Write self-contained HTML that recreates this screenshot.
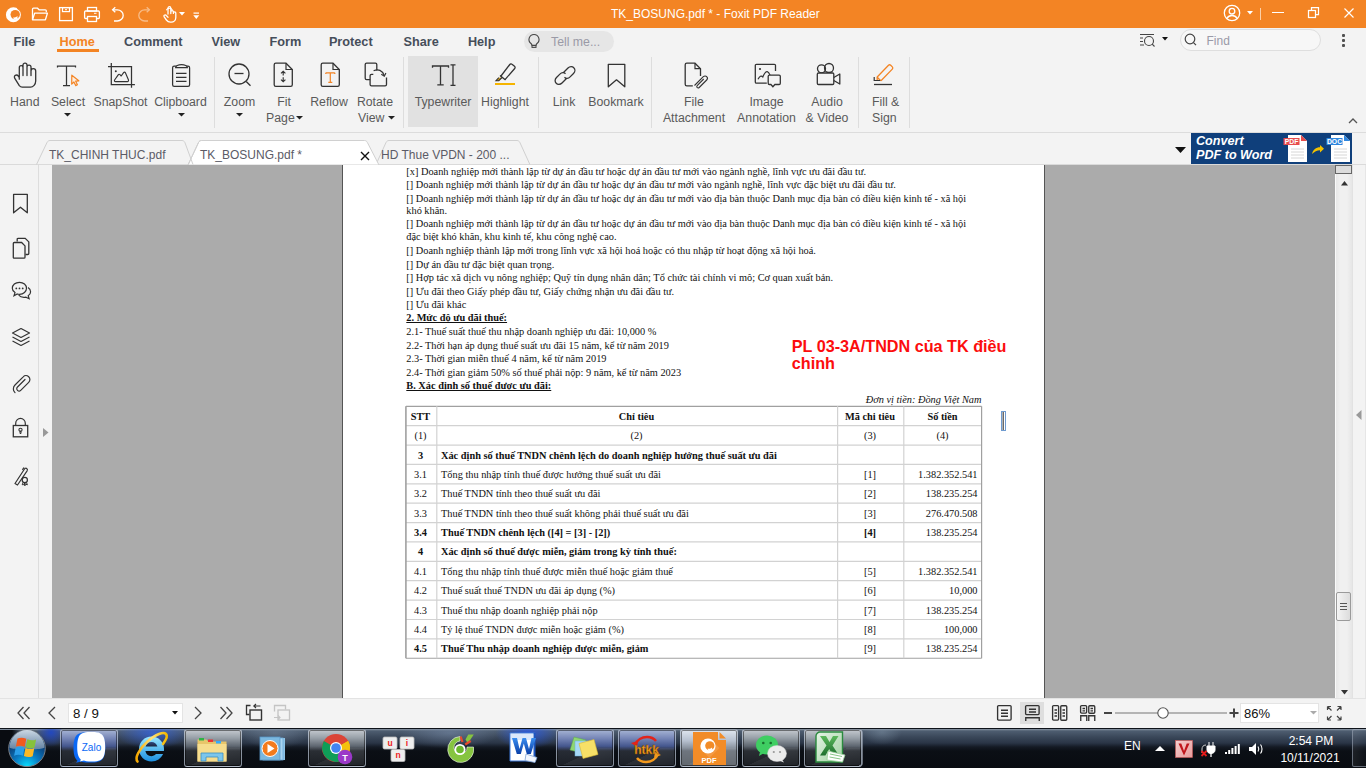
<!DOCTYPE html>
<html><head><meta charset="utf-8">
<style>
*{margin:0;padding:0;box-sizing:border-box}
html,body{width:1366px;height:768px;overflow:hidden;background:#f3f3f3;font-family:"Liberation Sans",sans-serif;position:relative}
.a{position:absolute}
svg.a{overflow:visible}
</style></head><body>
<div class="a" style="left:0px;top:0px;width:1366px;height:28px;background:#f38424"></div>
<svg class="a" style="left:5px;top:5px;" width="18" height="18" viewBox="0 0 18 18"><circle cx="8.4" cy="9.7" r="7.5" fill="#fff"/><circle cx="10.2" cy="9.6" r="4.7" fill="#f38424"/><path d="M8.2 12.2c1.6.5 3.2 0 4.3-1.2.2.7 0 1.4-.4 2 .9-.3 1.5-.9 1.9-1.6-.4 2-2.3 3.3-4.3 3.1-.8-.1-1.3-.9-1.5-2.3z" fill="#fff"/><path d="M12 3.2l2.6 2.4M14.2 2.8l1.8 2.2" stroke="#f38424" stroke-width="0.9"/></svg>
<svg class="a" style="left:31px;top:6px;" width="18" height="16" viewBox="0 0 18 16"><path d="M1.5 13.5V3.2c0-.6.4-1 1-1h4l1.6 1.6h6.2c.6 0 1 .4 1 1v1.4" stroke="#fff" stroke-width="1.3" fill="none"/><path d="M1.5 13.8L3.6 7.2h12.8l-2 6.6z" stroke="#fff" stroke-width="1.3" fill="none" stroke-linejoin="round"/></svg>
<svg class="a" style="left:58px;top:6px;" width="16" height="16" viewBox="0 0 16 16"><rect x="1.6" y="1.6" width="12.8" height="13" fill="none" stroke="#fff" stroke-width="1.3"/><rect x="4.5" y="1.6" width="7" height="4" fill="none" stroke="#fff" stroke-width="1.2"/><rect x="7" y="3.2" width="2" height="1" fill="#fff"/></svg>
<svg class="a" style="left:83px;top:6px;" width="18" height="17" viewBox="0 0 18 17"><rect x="4.5" y="1.5" width="9" height="3.6" fill="none" stroke="#fff" stroke-width="1.3"/><rect x="1.6" y="5" width="14.8" height="7.5" rx="1" fill="none" stroke="#fff" stroke-width="1.3"/><rect x="4.5" y="10.5" width="9" height="5" fill="#f38424" stroke="#fff" stroke-width="1.3"/><rect x="11" y="6.8" width="2.5" height="1" fill="#fff"/></svg>
<svg class="a" style="left:111px;top:6px;" width="14" height="16" viewBox="0 0 14 16"><path d="M1.8 3.8h4.5c3.3 0 5.9 2.6 5.9 5.6s-2.6 5.6-5.9 5.6H3" stroke="#fff" stroke-width="1.3" fill="none"/><path d="M4.3 1.3L1.6 3.8l2.7 2.5" stroke="#fff" stroke-width="1.3" fill="none"/></svg>
<svg class="a" style="left:137px;top:6px;" width="14" height="16" viewBox="0 0 14 16"><g opacity="0.45"><path d="M12.2 3.8H7.7C4.4 3.8 1.8 6.4 1.8 9.4s2.6 5.6 5.9 5.6H11" stroke="#fff" stroke-width="1.3" fill="none"/><path d="M9.7 1.3l2.7 2.5-2.7 2.5" stroke="#fff" stroke-width="1.3" fill="none"/></g></svg>
<svg class="a" style="left:162px;top:5px;" width="17" height="18" viewBox="0 0 17 18"><path d="M6 9V3.2c0-.9.6-1.5 1.4-1.5s1.4.6 1.4 1.5V8.5M8.8 8V7c0-.8.6-1.3 1.3-1.3s1.3.5 1.3 1.3v1.4M11.4 8c0-.7.5-1.2 1.2-1.2s1.2.5 1.2 1.2v4.5c0 2.7-2 4.7-4.6 4.7H8.4C6.6 17.2 5.4 16.4 4.4 15L2.2 11.8c-.5-.7-.3-1.5.4-1.8.6-.3 1.3 0 1.7.5L6 12.2" stroke="#fff" stroke-width="1.3" fill="none" stroke-linecap="round"/><path d="M4.3 5.2a3.4 3.4 0 0 1 6.2 0" stroke="#fff" stroke-width="1.1" fill="none"/></svg>
<svg class="a" style="left:179px;top:12px;" width="7" height="4" viewBox="0 0 7 4"><path d="M0 0h6L3 3.5z" fill="#fff"/></svg>
<svg class="a" style="left:193px;top:12px;" width="7" height="8" viewBox="0 0 7 8"><rect x="0.5" y="0.5" width="5.5" height="1.2" fill="#fff"/><path d="M0.3 3.2h6L3.3 7z" fill="#fff"/></svg>
<div class="a" style="left:611px;top:8.34px;font-size:12px;line-height:12px;font-family:'Liberation Sans',sans-serif;font-weight:normal;font-style:normal;color:#fff;white-space:nowrap;">TK_BOSUNG.pdf * - Foxit PDF Reader</div>
<svg class="a" style="left:1223px;top:4px;" width="18" height="18" viewBox="0 0 18 18"><circle cx="9" cy="9" r="7.7" stroke="#fff" stroke-width="1.3" fill="none"/><circle cx="9" cy="7.2" r="2.8" stroke="#fff" stroke-width="1.3" fill="none"/><path d="M3.8 14.5c1.2-2 3-3 5.2-3s4 1 5.2 3" stroke="#fff" stroke-width="1.3" fill="none"/></svg>
<svg class="a" style="left:1247px;top:11px;" width="6" height="4" viewBox="0 0 6 4"><path d="M0 0h6L3 3.5z" fill="#fff"/></svg>
<div class="a" style="left:1260px;top:8px;width:1px;height:12px;background:#fbd0a8"></div>
<div class="a" style="left:1272px;top:12px;width:12px;height:1.3px;background:#fff"></div>
<svg class="a" style="left:1307px;top:6px;" width="13" height="13" viewBox="0 0 13 13"><rect x="1.5" y="4.5" width="7" height="7" fill="none" stroke="#fff" stroke-width="1.25"/><path d="M4.5 4.5v-3h7v7h-3" fill="none" stroke="#fff" stroke-width="1.25"/></svg>
<svg class="a" style="left:1343px;top:7px;" width="12" height="12" viewBox="0 0 12 12"><path d="M1.5 1.5l9 9M10.5 1.5l-9 9" stroke="#fff" stroke-width="1.15"/></svg>
<div class="a" style="left:13.5px;top:35.55px;font-size:12.7px;line-height:12.7px;font-family:'Liberation Sans',sans-serif;font-weight:bold;font-style:normal;color:#464e5a;white-space:nowrap;">File</div>
<div class="a" style="left:124.0px;top:35.55px;font-size:12.7px;line-height:12.7px;font-family:'Liberation Sans',sans-serif;font-weight:bold;font-style:normal;color:#464e5a;white-space:nowrap;">Comment</div>
<div class="a" style="left:211.5px;top:35.55px;font-size:12.7px;line-height:12.7px;font-family:'Liberation Sans',sans-serif;font-weight:bold;font-style:normal;color:#464e5a;white-space:nowrap;">View</div>
<div class="a" style="left:269.5px;top:35.55px;font-size:12.7px;line-height:12.7px;font-family:'Liberation Sans',sans-serif;font-weight:bold;font-style:normal;color:#464e5a;white-space:nowrap;">Form</div>
<div class="a" style="left:328.9px;top:35.55px;font-size:12.7px;line-height:12.7px;font-family:'Liberation Sans',sans-serif;font-weight:bold;font-style:normal;color:#464e5a;white-space:nowrap;">Protect</div>
<div class="a" style="left:403.5px;top:35.55px;font-size:12.7px;line-height:12.7px;font-family:'Liberation Sans',sans-serif;font-weight:bold;font-style:normal;color:#464e5a;white-space:nowrap;">Share</div>
<div class="a" style="left:467.9px;top:35.55px;font-size:12.7px;line-height:12.7px;font-family:'Liberation Sans',sans-serif;font-weight:bold;font-style:normal;color:#464e5a;white-space:nowrap;">Help</div>
<div class="a" style="left:59.5px;top:35.55px;font-size:12.7px;line-height:12.7px;font-family:'Liberation Sans',sans-serif;font-weight:bold;font-style:normal;color:#f38424;white-space:nowrap;">Home</div>
<div class="a" style="left:57px;top:49px;width:42px;height:3px;background:#f38424"></div>
<div class="a" style="left:524px;top:31px;width:90px;height:21px;background:#e6e6e6;border-radius:11px"></div>
<svg class="a" style="left:527px;top:33px;" width="14" height="16" viewBox="0 0 14 16"><path d="M7 1.5a5 5 0 0 0-3 9c.6.5.9 1.1.9 1.8h4.2c0-.7.3-1.3.9-1.8a5 5 0 0 0-3-9z" fill="none" stroke="#444" stroke-width="1.1"/><rect x="5" y="12.6" width="4" height="1.8" fill="none" stroke="#444" stroke-width="1"/></svg>
<div class="a" style="left:551px;top:35.59px;font-size:12.3px;line-height:12.3px;font-family:'Liberation Sans',sans-serif;font-weight:normal;font-style:normal;color:#9a9aa6;white-space:nowrap;">Tell me...</div>
<svg class="a" style="left:1139px;top:33px;" width="18" height="14" viewBox="0 0 18 14"><path d="M1 1.5h14M1 5h3M1 8.5h3M1 12h4" stroke="#444" stroke-width="1.1"/><circle cx="10" cy="8" r="4.5" fill="none" stroke="#444" stroke-width="1.1"/><path d="M13.2 11.2l2.3 2.3" stroke="#444" stroke-width="1.1"/></svg>
<svg class="a" style="left:1162px;top:37px;" width="6" height="4" viewBox="0 0 6 4"><path d="M0 0h6L3 3.5z" fill="#111"/></svg>
<div class="a" style="left:1180px;top:29px;width:141px;height:22px;background:#f7f7f7;border:1px solid #dedede;border-radius:11px"></div>
<svg class="a" style="left:1184px;top:33px;" width="14" height="14" viewBox="0 0 14 14"><circle cx="6" cy="6" r="4.8" fill="none" stroke="#444" stroke-width="1.2"/><path d="M9.5 9.6l2.5 2.5" stroke="#444" stroke-width="1.2"/></svg>
<div class="a" style="left:1206.5px;top:35.14px;font-size:12px;line-height:12px;font-family:'Liberation Sans',sans-serif;font-weight:normal;font-style:normal;color:#9a9aa8;white-space:nowrap;">Find</div>
<div class="a" style="left:1342px;top:34px;width:3px;height:3px;background:#505050;border-radius:1px"></div>
<div class="a" style="left:1342px;top:39px;width:3px;height:3px;background:#505050;border-radius:1px"></div>
<div class="a" style="left:1342px;top:44px;width:3px;height:3px;background:#505050;border-radius:1px"></div>
<div class="a" style="left:0px;top:132px;width:1366px;height:1px;background:#dcdcdc"></div>
<div class="a" style="left:214px;top:57px;width:1px;height:71px;background:#dddddd"></div>
<div class="a" style="left:403px;top:57px;width:1px;height:71px;background:#dddddd"></div>
<div class="a" style="left:538px;top:57px;width:1px;height:71px;background:#dddddd"></div>
<div class="a" style="left:651px;top:57px;width:1px;height:71px;background:#dddddd"></div>
<div class="a" style="left:858px;top:57px;width:1px;height:71px;background:#dddddd"></div>
<div class="a" style="left:909px;top:57px;width:1px;height:71px;background:#dddddd"></div>
<div class="a" style="left:408px;top:56px;width:70px;height:71px;background:#e1e1e1"></div>
<svg class="a" style="left:13px;top:61px;" width="25" height="28" viewBox="0 0 25 28"><path d="M6.3 18.2V6.6c0-1.1.8-1.9 1.85-1.9s1.85.8 1.85 1.9v8M10 14.6V4.1c0-1.1.9-2 2-2s2 .9 2 2v10.5M14 14.6V6.1c0-1.1.9-2 2-2s2 .9 2 2v8.5M18 14.6V10c0-1.3 1-2.3 2.3-2.3s2.4 1 2.4 2.3v10c0 3.4-2.6 6.2-5.2 6.2H9.2c-1.2 0-2.1-.5-2.9-1.5L1.8 17.4c-.7-1.1-.5-2.4.5-3 1-.6 2.3-.3 3 .7l1 1.4" fill="none" stroke="#333" stroke-width="1.3" stroke-linecap="round" stroke-linejoin="round"/></svg>
<div class="a" style="left:-275.2px;width:600px;text-align:center;top:96.29px;font-size:12.3px;line-height:12.3px;font-family:'Liberation Sans',sans-serif;font-weight:normal;font-style:normal;color:#5a5a5a;white-space:nowrap;">Hand</div>
<svg class="a" style="left:56px;top:64px;" width="26" height="26" viewBox="0 0 26 26"><path d="M1.5 3.4V2.1h18v1.3M10.5 2.1v19.4M7 21.5h7" stroke="#333" stroke-width="1.25" fill="none"/><path d="M15.8 11.2l7 5.6-3.2.3 1.8 3.6-1.7.9-1.8-3.6-2.2 2.2z" fill="#fdeee0" stroke="#f38424" stroke-width="1.2" stroke-linejoin="round"/></svg>
<div class="a" style="left:-232px;width:600px;text-align:center;top:96.29px;font-size:12.3px;line-height:12.3px;font-family:'Liberation Sans',sans-serif;font-weight:normal;font-style:normal;color:#5a5a5a;white-space:nowrap;">Select</div>
<svg class="a" style="left:64px;top:113px;" width="7" height="4" viewBox="0 0 7 4"><path d="M0 0h7L3.5 3.5z" fill="#222"/></svg>
<svg class="a" style="left:106px;top:62px;" width="30" height="28" viewBox="0 0 30 28"><path d="M2 4.5h23.5V25.8M5.3 1v21.5h23.6" fill="none" stroke="#333" stroke-width="1.25"/><circle cx="9.8" cy="9.2" r="1" fill="#333"/><path d="M9.6 19.6c-1 0-1.5-.8-1-1.6l3.6-5.2c.5-.7 1.3-.7 1.8-.1l1.2 1.3 2.4-3.3c.5-.7 1.4-.7 1.8.1l3 6.9c.4.9-.1 1.9-1 1.9z" fill="none" stroke="#333" stroke-width="1.15" stroke-linejoin="round"/></svg>
<div class="a" style="left:-179.5px;width:600px;text-align:center;top:96.29px;font-size:12.3px;line-height:12.3px;font-family:'Liberation Sans',sans-serif;font-weight:normal;font-style:normal;color:#5a5a5a;white-space:nowrap;">SnapShot</div>
<svg class="a" style="left:171px;top:62px;" width="20" height="26" viewBox="0 0 20 26"><rect x="1.6" y="4.1" width="17" height="20.3" rx="1.6" fill="none" stroke="#333" stroke-width="1.25"/><path d="M4.6 5.7c0-1.8 2.6-3.2 5.9-3.2s5.9 1.4 5.9 3.2z" fill="#f3f3f3" stroke="#333" stroke-width="1.25"/><path d="M5 11.4h10.5M5 15.4h10.5M5 19.4h10.5" stroke="#333" stroke-width="1.15"/></svg>
<div class="a" style="left:-119.5px;width:600px;text-align:center;top:96.29px;font-size:12.3px;line-height:12.3px;font-family:'Liberation Sans',sans-serif;font-weight:normal;font-style:normal;color:#5a5a5a;white-space:nowrap;">Clipboard</div>
<svg class="a" style="left:178px;top:113px;" width="7" height="4" viewBox="0 0 7 4"><path d="M0 0h7L3.5 3.5z" fill="#222"/></svg>
<svg class="a" style="left:228px;top:63px;" width="25" height="26" viewBox="0 0 25 26"><circle cx="11" cy="11" r="10" fill="none" stroke="#333" stroke-width="1.3"/><path d="M6.5 10.5h9" stroke="#333" stroke-width="1.3"/><path d="M18.2 18.5l4.3 4.3" stroke="#333" stroke-width="1.3"/></svg>
<div class="a" style="left:-60.5px;width:600px;text-align:center;top:96.29px;font-size:12.3px;line-height:12.3px;font-family:'Liberation Sans',sans-serif;font-weight:normal;font-style:normal;color:#5a5a5a;white-space:nowrap;">Zoom</div>
<svg class="a" style="left:236px;top:113px;" width="7" height="4" viewBox="0 0 7 4"><path d="M0 0h7L3.5 3.5z" fill="#222"/></svg>
<svg class="a" style="left:273px;top:62px;" width="22" height="26" viewBox="0 0 22 26"><path d="M1.2 2.8c0-.9.7-1.6 1.6-1.6H13l6.3 6.3v15.3c0 .9-.7 1.6-1.6 1.6H2.8c-.9 0-1.6-.7-1.6-1.6z" fill="none" stroke="#333" stroke-width="1.3"/><path d="M13 1.2v6.3h6.3" fill="none" stroke="#333" stroke-width="1.2"/><path d="M10.2 9.3v4.2M10.2 15.2v4.5M8 11.4l2.2-2.2 2.2 2.2M8 17.6l2.2 2.2 2.2-2.2" fill="none" stroke="#333" stroke-width="1.15"/></svg>
<div class="a" style="left:-16px;width:600px;text-align:center;top:96.29px;font-size:12.3px;line-height:12.3px;font-family:'Liberation Sans',sans-serif;font-weight:normal;font-style:normal;color:#5a5a5a;white-space:nowrap;">Fit</div>
<div class="a" style="left:266px;top:112.29px;font-size:12.3px;line-height:12.3px;font-family:'Liberation Sans',sans-serif;font-weight:normal;font-style:normal;color:#5a5a5a;white-space:nowrap;">Page</div>
<svg class="a" style="left:296px;top:116px;" width="7" height="4" viewBox="0 0 7 4"><path d="M0 0h7L3.5 3.5z" fill="#222"/></svg>
<svg class="a" style="left:320px;top:62px;" width="22" height="26" viewBox="0 0 22 26"><path d="M1.2 2.8c0-.9.7-1.6 1.6-1.6H13l6.3 6.3v15.3c0 .9-.7 1.6-1.6 1.6H2.8c-.9 0-1.6-.7-1.6-1.6z" fill="none" stroke="#333" stroke-width="1.3"/><path d="M13 1.2v6.3h6.3" fill="none" stroke="#333" stroke-width="1.2"/><path d="M5.8 10.8h9M10.3 10.8v9.5M8.3 20.3h4M5.8 10.8v1.3M14.8 10.8v1.3" fill="none" stroke="#f38424" stroke-width="1.2"/></svg>
<div class="a" style="left:29px;width:600px;text-align:center;top:96.29px;font-size:12.3px;line-height:12.3px;font-family:'Liberation Sans',sans-serif;font-weight:normal;font-style:normal;color:#5a5a5a;white-space:nowrap;">Reflow</div>
<svg class="a" style="left:364px;top:62px;" width="25" height="26" viewBox="0 0 25 26"><path d="M12.8 8.5V2.6c0-.8-.6-1.4-1.4-1.4H2.6c-.8 0-1.4.6-1.4 1.4v13.6c0 .8.6 1.4 1.4 1.4h3.6" fill="none" stroke="#333" stroke-width="1.3"/><path d="M9.3 12.4H7.5c-.8 0-1.4.6-1.4 1.4v8.6c0 .8.6 1.4 1.4 1.4h13.6c.8 0 1.4-.6 1.4-1.4v-7" fill="none" stroke="#333" stroke-width="1.3"/><path d="M9.6 8.8c4.5-2.2 8.8-.6 10.6 4.6" fill="none" stroke="#333" stroke-width="1.2"/><path d="M17.3 12.2l3 2 1.6-3.2" fill="none" stroke="#333" stroke-width="1.2"/></svg>
<div class="a" style="left:75px;width:600px;text-align:center;top:96.29px;font-size:12.3px;line-height:12.3px;font-family:'Liberation Sans',sans-serif;font-weight:normal;font-style:normal;color:#5a5a5a;white-space:nowrap;">Rotate</div>
<div class="a" style="left:358px;top:112.29px;font-size:12.3px;line-height:12.3px;font-family:'Liberation Sans',sans-serif;font-weight:normal;font-style:normal;color:#5a5a5a;white-space:nowrap;">View</div>
<svg class="a" style="left:388px;top:116px;" width="7" height="4" viewBox="0 0 7 4"><path d="M0 0h7L3.5 3.5z" fill="#222"/></svg>
<svg class="a" style="left:430px;top:63px;" width="27" height="24" viewBox="0 0 27 24"><path d="M2.5 4.8V3h16v1.8M10.5 3v18.8M7.3 21.8h6.4M20.5 1.8h5M23 1.8v20.5M20.5 22.3h5" fill="none" stroke="#333" stroke-width="1.3"/></svg>
<div class="a" style="left:143px;width:600px;text-align:center;top:96.29px;font-size:12.3px;line-height:12.3px;font-family:'Liberation Sans',sans-serif;font-weight:normal;font-style:normal;color:#5a5a5a;white-space:nowrap;">Typewriter</div>
<svg class="a" style="left:494px;top:62px;" width="24" height="25" viewBox="0 0 24 25"><path d="M8 15.5l-3.2 3.2H2l2.8-3" fill="#d4a017" stroke="#333" stroke-width="1.1"/><path d="M6.6 14.5L15.8 2.5c.6-.7 1.6-.8 2.2-.2l2.5 2c.7.6.8 1.6.2 2.2L11 17.6" fill="none" stroke="#333" stroke-width="1.3"/><path d="M6 13.5l5.5 4.5" stroke="#333" stroke-width="1.3"/><rect x="1" y="21" width="20" height="2" fill="#f5b400"/></svg>
<div class="a" style="left:205px;width:600px;text-align:center;top:96.29px;font-size:12.3px;line-height:12.3px;font-family:'Liberation Sans',sans-serif;font-weight:normal;font-style:normal;color:#5a5a5a;white-space:nowrap;">Highlight</div>
<svg class="a" style="left:553px;top:64px;" width="24" height="23" viewBox="0 0 24 23"><path d="M10.5 8.5l4.5-4.5c1.8-1.8 4.4-1.8 5.8-.3 1.5 1.5 1.5 4 -.3 5.8l-3.4 3.4c-1.8 1.8-4.2 1.9-5.6.4M13.5 14.5L9 19c-1.8 1.8-4.4 1.8-5.8.3-1.5-1.5-1.5-4 .3-5.8l3.4-3.4c1.8-1.8 4.2-1.9 5.6-.4" fill="none" stroke="#333" stroke-width="1.3"/></svg>
<div class="a" style="left:264px;width:600px;text-align:center;top:96.29px;font-size:12.3px;line-height:12.3px;font-family:'Liberation Sans',sans-serif;font-weight:normal;font-style:normal;color:#5a5a5a;white-space:nowrap;">Link</div>
<svg class="a" style="left:607px;top:63px;" width="20" height="26" viewBox="0 0 20 26"><path d="M1.3 1.3h16.5v22.5L9.5 16.8 1.3 23.8z" fill="none" stroke="#333" stroke-width="1.3" stroke-linejoin="round"/></svg>
<div class="a" style="left:316px;width:600px;text-align:center;top:96.29px;font-size:12.3px;line-height:12.3px;font-family:'Liberation Sans',sans-serif;font-weight:normal;font-style:normal;color:#5a5a5a;white-space:nowrap;">Bookmark</div>
<svg class="a" style="left:684px;top:62px;" width="24" height="27" viewBox="0 0 24 27"><path d="M16.5 14V6.7L11 1.2H2.8c-.9 0-1.6.7-1.6 1.6v19.4c0 .9.7 1.6 1.6 1.6h6" fill="none" stroke="#333" stroke-width="1.3"/><path d="M11 1.2v5.5h5.5" fill="none" stroke="#333" stroke-width="1.2"/><path d="M10.5 23.5l8.8-8.8c1-1 2.6-1 3.4 0 .9.9.9 2.4 0 3.3l-7.5 7.5c-.6.6-1.5.6-2 0-.5-.5-.5-1.4 0-2l6.5-6.5" fill="none" stroke="#333" stroke-width="1.1"/></svg>
<div class="a" style="left:394px;width:600px;text-align:center;top:96.29px;font-size:12.3px;line-height:12.3px;font-family:'Liberation Sans',sans-serif;font-weight:normal;font-style:normal;color:#5a5a5a;white-space:nowrap;">File</div>
<div class="a" style="left:394px;width:600px;text-align:center;top:112.29px;font-size:12.3px;line-height:12.3px;font-family:'Liberation Sans',sans-serif;font-weight:normal;font-style:normal;color:#5a5a5a;white-space:nowrap;">Attachment</div>
<svg class="a" style="left:754px;top:63px;" width="28" height="27" viewBox="0 0 28 27"><path d="M21.5 8V2.5c0-.7-.5-1.2-1.2-1.2H2.5c-.7 0-1.2.5-1.2 1.2v16.5c0 .7.5 1.2 1.2 1.2h10.3" fill="none" stroke="#333" stroke-width="1.3"/><circle cx="6" cy="6" r="1.1" fill="#333"/><path d="M4 16.3c1.6-3 3.2-4.3 4.8-2.3 1.5-3.6 3-5.5 4.5-5.3 1.2.2 2 1.6 2.8 3.6" fill="none" stroke="#333" stroke-width="1.2"/><path d="M14.2 13.3c0-.7.5-1.2 1.2-1.2h9.7c.7 0 1.2.5 1.2 1.2v7c0 .7-.5 1.2-1.2 1.2h-4.2l-2 2.2-2-2.2h-1.5c-.7 0-1.2-.5-1.2-1.2z" fill="#f3f3f3" stroke="#333" stroke-width="1.3"/></svg>
<div class="a" style="left:466.5px;width:600px;text-align:center;top:96.29px;font-size:12.3px;line-height:12.3px;font-family:'Liberation Sans',sans-serif;font-weight:normal;font-style:normal;color:#5a5a5a;white-space:nowrap;">Image</div>
<div class="a" style="left:466.5px;width:600px;text-align:center;top:112.29px;font-size:12.3px;line-height:12.3px;font-family:'Liberation Sans',sans-serif;font-weight:normal;font-style:normal;color:#5a5a5a;white-space:nowrap;">Annotation</div>
<svg class="a" style="left:816px;top:63px;" width="26" height="23" viewBox="0 0 26 23"><circle cx="5.5" cy="5.8" r="4" fill="none" stroke="#333" stroke-width="1.3"/><circle cx="13" cy="5" r="4.5" fill="none" stroke="#333" stroke-width="1.3"/><rect x="1.3" y="10" width="16.5" height="11.5" rx="1.2" fill="#f3f3f3" stroke="#333" stroke-width="1.3"/><path d="M17.8 14.5l6-3.5v10l-6-3.5" fill="none" stroke="#333" stroke-width="1.3" stroke-linejoin="round"/></svg>
<div class="a" style="left:527px;width:600px;text-align:center;top:96.29px;font-size:12.3px;line-height:12.3px;font-family:'Liberation Sans',sans-serif;font-weight:normal;font-style:normal;color:#5a5a5a;white-space:nowrap;">Audio</div>
<div class="a" style="left:527px;width:600px;text-align:center;top:112.29px;font-size:12.3px;line-height:12.3px;font-family:'Liberation Sans',sans-serif;font-weight:normal;font-style:normal;color:#5a5a5a;white-space:nowrap;">&amp; Video</div>
<svg class="a" style="left:873px;top:62px;" width="22" height="25" viewBox="0 0 22 25"><path d="M4.2 18.5V15L15.5 3.3c.6-.6 1.6-.6 2.2 0l1.6 1.6c.6.6.6 1.6 0 2.2L8 18.8" fill="none" stroke="#f38424" stroke-width="1.3" stroke-linejoin="round"/><path d="M4.2 15.2l3.6 3.6" stroke="#f38424" stroke-width="1.3"/><path d="M1.2 15v3.5h6" fill="none" stroke="#333" stroke-width="1.2"/><path d="M1 22.5h18" stroke="#333" stroke-width="1.3"/></svg>
<div class="a" style="left:872px;top:96.29px;font-size:12.3px;line-height:12.3px;font-family:'Liberation Sans',sans-serif;font-weight:normal;font-style:normal;color:#5a5a5a;white-space:nowrap;">Fill &amp;</div>
<div class="a" style="left:872px;top:112.29px;font-size:12.3px;line-height:12.3px;font-family:'Liberation Sans',sans-serif;font-weight:normal;font-style:normal;color:#5a5a5a;white-space:nowrap;">Sign</div>
<svg class="a" style="left:1348px;top:118px;" width="10" height="6" viewBox="0 0 10 6"><path d="M1 5l4-4 4 4" fill="none" stroke="#555" stroke-width="1.3"/></svg>
<div class="a" style="left:0px;top:164px;width:1366px;height:1px;background:#dadada"></div>
<svg class="a" style="left:374px;top:139px;" width="162" height="26" viewBox="0 0 162 26"><path d="M2 25.5L12 3.5c.6-1.2 1.6-2 3-2h128c1.3 0 2.3.8 2.9 2l10 22" fill="none" stroke="#d0d0d0" stroke-width="1"/></svg>
<svg class="a" style="left:187px;top:139px;" width="195" height="26" viewBox="0 0 195 26"><path d="M1 26L11.5 3.5c.6-1.2 1.6-2 3-2h163c1.3 0 2.3.8 2.9 2L192 26z" fill="#fff" stroke="#d0d0d0" stroke-width="1"/></svg>
<svg class="a" style="left:35px;top:139px;" width="162" height="26" viewBox="0 0 162 26"><path d="M1.5 25.5L12 3.5c.6-1.2 1.6-2 3-2h132c1.3 0 2.3.8 2.9 2L158 25.5" fill="none" stroke="#d0d0d0" stroke-width="1"/></svg>
<svg class="a" style="left:187px;top:139px;" width="195" height="26" viewBox="0 0 195 26"><path d="M1 26L11.5 3.5c.6-1.2 1.6-2 3-2" fill="none" stroke="#d0d0d0" stroke-width="1"/></svg>
<div class="a" style="left:49px;top:149.34px;font-size:12px;line-height:12px;font-family:'Liberation Sans',sans-serif;font-weight:normal;font-style:normal;color:#5b5b66;white-space:nowrap;">TK_CHINH THUC.pdf</div>
<div class="a" style="left:200px;top:149.34px;font-size:12px;line-height:12px;font-family:'Liberation Sans',sans-serif;font-weight:normal;font-style:normal;color:#5b5b66;white-space:nowrap;">TK_BOSUNG.pdf *</div>
<svg class="a" style="left:360px;top:151px;" width="10" height="10" viewBox="0 0 10 10"><path d="M1 1l8 8M9 1L1 9" stroke="#111" stroke-width="1.4"/></svg>
<div class="a" style="left:381px;top:149.34px;font-size:12px;line-height:12px;font-family:'Liberation Sans',sans-serif;font-weight:normal;font-style:normal;color:#5b5b66;white-space:nowrap;">HD Thue VPDN - 200 ...</div>
<svg class="a" style="left:1175px;top:147px;" width="11" height="7" viewBox="0 0 11 7"><path d="M0 0h11L5.5 6z" fill="#111"/></svg>
<div class="a" style="left:1191px;top:133px;width:161px;height:31px;background:#0f3f7b"></div>
<div class="a" style="left:1196px;top:135.33px;font-size:12.6px;line-height:12.6px;font-family:'Liberation Sans',sans-serif;font-weight:bold;font-style:italic;color:#fff;white-space:nowrap;">Convert</div>
<div class="a" style="left:1196px;top:148.63px;font-size:12.6px;line-height:12.6px;font-family:'Liberation Sans',sans-serif;font-weight:bold;font-style:italic;color:#fff;white-space:nowrap;">PDF to Word</div>
<svg class="a" style="left:1283px;top:134px;" width="26" height="29" viewBox="0 0 26 29"><path d="M5 1h13l6 6v21H5z" fill="#fff"/><path d="M18 1l6 6h-6z" fill="#e74c4c"/><rect x="0.5" y="4" width="16" height="7" fill="#e74c4c"/><text x="8.5" y="10" font-family="Liberation Sans" font-weight="bold" font-size="6.8" fill="#fff" text-anchor="middle">PDF</text><path d="M8 15h13M8 18h13M8 21h13M8 24h13" stroke="#ccc" stroke-width="0.8"/></svg>
<svg class="a" style="left:1311px;top:144px;" width="14" height="11" viewBox="0 0 14 11"><path d="M1 10c1-4.5 4-6.8 8-6.8V1l4 3.8-4 3.8V6.2C6 6.2 3.5 7.5 1 10z" fill="#f2c100"/></svg>
<svg class="a" style="left:1326px;top:134px;" width="26" height="29" viewBox="0 0 26 29"><path d="M5 1h13l6 6v21H5z" fill="#fff"/><path d="M18 1l6 6h-6z" fill="#2e86de"/><rect x="0.5" y="4" width="16" height="7" fill="#2e86de"/><text x="8.5" y="10" font-family="Liberation Sans" font-weight="bold" font-size="6.8" fill="#fff" text-anchor="middle">DOC</text><path d="M8 15h13M8 18h13M8 21h13M8 24h13" stroke="#ccc" stroke-width="0.8"/></svg>
<div class="a" style="left:38px;top:165px;width:1px;height:533px;background:#dddddd"></div>
<svg class="a" style="left:12px;top:193px;" width="17" height="21" viewBox="0 0 17 21"><path d="M1.6 1.3h13.7v18.5l-6.85-5.6-6.85 5.6z" fill="none" stroke="#333" stroke-width="1.3" stroke-linejoin="round"/></svg>
<svg class="a" style="left:12px;top:237px;" width="18" height="22" viewBox="0 0 18 22"><path d="M5.2 4.5V2.3c0-.6.4-1 1-1h7l3.6 3.6v11.6c0 .6-.4 1-1 1h-2.3" fill="none" stroke="#333" stroke-width="1.3"/><path d="M1.3 6.5c0-.6.4-1 1-1h7.3l3.4 3.4v11.3c0 .6-.4 1-1 1H2.3c-.6 0-1-.4-1-1z" fill="#f3f3f3" stroke="#333" stroke-width="1.3"/></svg>
<svg class="a" style="left:11px;top:281px;" width="21" height="20" viewBox="0 0 21 20"><path d="M8.5 1.3c4 0 7 2.7 7 6s-3 6-7 6c-.8 0-1.5-.1-2.2-.3L3 14.8l1-3.2C2.3 10.5 1.3 9 1.3 7.3c0-3.3 3-6 7.2-6z" fill="none" stroke="#333" stroke-width="1.2"/><path d="M17 6.5c1.6 1 2.6 2.5 2.6 4.2 0 1.6-.9 3-2.4 4l.9 3-3.2-1.6c-.6.2-1.3.3-2 .3-2.2 0-4-.8-5.2-2.2" fill="none" stroke="#333" stroke-width="1.2"/><circle cx="5.3" cy="7.4" r="0.9" fill="#333"/><circle cx="8.5" cy="7.4" r="0.9" fill="#333"/><circle cx="11.7" cy="7.4" r="0.9" fill="#333"/></svg>
<svg class="a" style="left:11px;top:327px;" width="20" height="20" viewBox="0 0 20 20"><path d="M10 1.5L18.5 6 10 10.5 1.5 6z" fill="none" stroke="#333" stroke-width="1.2" stroke-linejoin="round"/><path d="M1.5 10L10 14.5 18.5 10M1.5 14L10 18.5 18.5 14" fill="none" stroke="#333" stroke-width="1.2" stroke-linejoin="round"/></svg>
<svg class="a" style="left:12px;top:373px;" width="18" height="21" viewBox="0 0 18 21"><path d="M13 6.5L5.5 14c-1 1-1 2.4 0 3.3.9.9 2.3.9 3.2 0l8-8c1.6-1.6 1.6-4 0-5.5s-4-1.6-5.5 0L3 12c-2.2 2.2-2.2 5.6 0 7.6" fill="none" stroke="#333" stroke-width="1.2" stroke-linecap="round"/></svg>
<svg class="a" style="left:12px;top:417px;" width="17" height="21" viewBox="0 0 17 21"><path d="M3.7 8.5V6.2a4.8 4.8 0 0 1 9.6 0v2.3" fill="none" stroke="#333" stroke-width="1.2"/><rect x="1.3" y="8.5" width="14.4" height="11.3" fill="none" stroke="#333" stroke-width="1.3"/><circle cx="8.5" cy="12.8" r="1.6" fill="none" stroke="#333" stroke-width="1.1"/><path d="M8 14.3h1v2.2H8z" fill="none" stroke="#333" stroke-width="1"/></svg>
<svg class="a" style="left:43px;top:428px;" width="6" height="9" viewBox="0 0 6 9"><path d="M0 0l5.5 4.5L0 9z" fill="#999"/></svg>
<svg class="a" style="left:13px;top:466px;" width="17" height="19" viewBox="0 0 17 19"><path d="M2 17.5l9.5-14.5c.5-.8 1.5-1 2.2-.5.7.5.9 1.5.4 2.3L4.5 19z" fill="none" stroke="#333" stroke-width="1.2" stroke-linejoin="round"/><path d="M11 1.5l-1.6 2.4" stroke="#333" stroke-width="1.2"/><circle cx="11.8" cy="14" r="2.6" fill="none" stroke="#333" stroke-width="1.2"/><path d="M10.2 16.3l-1 2.5 1.5-.5.7 1.2.8-2.5M13.4 16.3l1 2.5-1.5-.5-.7 1.2-.8-2.5" fill="none" stroke="#333" stroke-width="1"/></svg>
<div class="a" style="left:52px;top:165px;width:1283px;height:533px;background:#ababab"></div>
<div class="a" style="left:342px;top:165px;width:1px;height:533px;background:#555"></div>
<div class="a" style="left:1044px;top:165px;width:1px;height:533px;background:#555"></div>
<div class="a" style="left:343px;top:165px;width:701px;height:533px;background:#fff"></div>
<div class="a" style="left:406.3px;top:166.94px;font-size:10.34px;line-height:10.34px;font-family:'Liberation Serif',serif;font-weight:normal;font-style:normal;color:#111;white-space:nowrap;">[x] Doanh nghiệp mới thành lập từ dự án đầu tư hoặc dự án đầu tư mới vào ngành nghề, lĩnh vực ưu đãi đầu tư.</div>
<div class="a" style="left:406.3px;top:180.14px;font-size:10.34px;line-height:10.34px;font-family:'Liberation Serif',serif;font-weight:normal;font-style:normal;color:#111;white-space:nowrap;">[] Doanh nghiệp mới thành lập từ dự án đầu tư hoặc dự án đầu tư mới vào ngành nghề, lĩnh vực đặc biệt ưu đãi đầu tư.</div>
<div class="a" style="left:406.3px;top:193.64px;font-size:10.34px;line-height:10.34px;font-family:'Liberation Serif',serif;font-weight:normal;font-style:normal;color:#111;white-space:nowrap;">[] Doanh nghiệp mới thành lập từ dự án đầu tư hoặc dự án đầu tư mới vào địa bàn thuộc Danh mục địa bàn có điều kiện kinh tế - xã hội</div>
<div class="a" style="left:406.3px;top:205.94px;font-size:10.34px;line-height:10.34px;font-family:'Liberation Serif',serif;font-weight:normal;font-style:normal;color:#111;white-space:nowrap;">khó khăn.</div>
<div class="a" style="left:406.3px;top:219.34px;font-size:10.34px;line-height:10.34px;font-family:'Liberation Serif',serif;font-weight:normal;font-style:normal;color:#111;white-space:nowrap;">[] Doanh nghiệp mới thành lập từ dự án đầu tư hoặc dự án đầu tư mới vào địa bàn thuộc Danh mục địa bàn có điều kiện kinh tế - xã hội</div>
<div class="a" style="left:406.3px;top:231.74px;font-size:10.34px;line-height:10.34px;font-family:'Liberation Serif',serif;font-weight:normal;font-style:normal;color:#111;white-space:nowrap;">đặc biệt khó khăn, khu kinh tế, khu công nghệ cao.</div>
<div class="a" style="left:406.3px;top:245.84px;font-size:10.34px;line-height:10.34px;font-family:'Liberation Serif',serif;font-weight:normal;font-style:normal;color:#111;white-space:nowrap;">[] Doanh nghiệp thành lập mới trong lĩnh vực xã hội hoá hoặc có thu nhập từ hoạt động xã hội hoá.</div>
<div class="a" style="left:406.3px;top:259.64px;font-size:10.34px;line-height:10.34px;font-family:'Liberation Serif',serif;font-weight:normal;font-style:normal;color:#111;white-space:nowrap;">[] Dự án đầu tư đặc biệt quan trọng.</div>
<div class="a" style="left:406.3px;top:272.94px;font-size:10.34px;line-height:10.34px;font-family:'Liberation Serif',serif;font-weight:normal;font-style:normal;color:#111;white-space:nowrap;">[] Hợp tác xã dịch vụ nông nghiệp; Quỹ tín dụng nhân dân; Tổ chức tài chính vi mô; Cơ quan xuất bản.</div>
<div class="a" style="left:406.3px;top:286.54px;font-size:10.34px;line-height:10.34px;font-family:'Liberation Serif',serif;font-weight:normal;font-style:normal;color:#111;white-space:nowrap;">[] Ưu đãi theo Giấy phép đầu tư, Giấy chứng nhận ưu đãi đầu tư.</div>
<div class="a" style="left:406.3px;top:300.04px;font-size:10.34px;line-height:10.34px;font-family:'Liberation Serif',serif;font-weight:normal;font-style:normal;color:#111;white-space:nowrap;">[] Ưu đãi khác</div>
<div class="a" style="left:406.3px;top:327.14px;font-size:10.34px;line-height:10.34px;font-family:'Liberation Serif',serif;font-weight:normal;font-style:normal;color:#111;white-space:nowrap;">2.1- Thuế suất thuế thu nhập doanh nghiệp ưu đãi: 10,000 %</div>
<div class="a" style="left:406.3px;top:340.84px;font-size:10.34px;line-height:10.34px;font-family:'Liberation Serif',serif;font-weight:normal;font-style:normal;color:#111;white-space:nowrap;">2.2- Thời hạn áp dụng thuế suất ưu đãi 15 năm, kể từ năm 2019</div>
<div class="a" style="left:406.3px;top:354.24px;font-size:10.34px;line-height:10.34px;font-family:'Liberation Serif',serif;font-weight:normal;font-style:normal;color:#111;white-space:nowrap;">2.3- Thời gian miễn thuế 4 năm, kể từ năm 2019</div>
<div class="a" style="left:406.3px;top:367.74px;font-size:10.34px;line-height:10.34px;font-family:'Liberation Serif',serif;font-weight:normal;font-style:normal;color:#111;white-space:nowrap;">2.4- Thời gian giảm 50% số thuế phải nộp: 9 năm, kể từ năm 2023</div>
<div class="a" style="left:406.3px;top:313.04px;font-size:10.34px;line-height:10.34px;font-family:'Liberation Serif',serif;font-weight:bold;font-style:normal;color:#111;white-space:nowrap;"><u style="text-underline-offset:0.6px;text-decoration-skip-ink:none">2. Mức độ ưu đãi thuế:</u></div>
<div class="a" style="left:406.3px;top:380.74px;font-size:10.34px;line-height:10.34px;font-family:'Liberation Serif',serif;font-weight:bold;font-style:normal;color:#111;white-space:nowrap;"><u style="text-underline-offset:0.6px;text-decoration-skip-ink:none">B. Xác định số thuế được ưu đãi: </u></div>
<div class="a" style="left:791.8px;top:338.29px;font-size:16.2px;line-height:16.2px;font-family:'Liberation Sans',sans-serif;font-weight:bold;font-style:normal;color:#fc0d0d;white-space:nowrap;">PL 03-3A/TNDN của TK điều</div>
<div class="a" style="left:791.8px;top:355.09px;font-size:16.2px;line-height:16.2px;font-family:'Liberation Sans',sans-serif;font-weight:bold;font-style:normal;color:#fc0d0d;white-space:nowrap;">chỉnh</div>
<div class="a" style="left:381.5px;width:600px;text-align:right;top:394.74px;font-size:10.34px;line-height:10.34px;font-family:'Liberation Serif',serif;font-weight:normal;font-style:italic;color:#111;white-space:nowrap;">Đơn vị tiền: Đồng Việt Nam</div>
<div class="a" style="left:1001px;top:411px;width:5px;height:20px;border:1px solid #6f9bd0;background:linear-gradient(90deg,#b0b0b0 0,#b0b0b0 1px,#6a6a6a 1px,#6a6a6a 2px,#fff 2px)"></div>
<svg class="a" style="left:400px;top:400px;" width="590" height="270" viewBox="0 0 590 270"><line x1="5.899999999999977" y1="6.30" x2="581.6" y2="6.30" stroke="#a0a0a0" stroke-width="1.2"/><line x1="5.899999999999977" y1="25.68" x2="581.6" y2="25.68" stroke="#d2d2d2" stroke-width="1.2"/><line x1="5.899999999999977" y1="45.06" x2="581.6" y2="45.06" stroke="#d2d2d2" stroke-width="1.2"/><line x1="5.899999999999977" y1="64.44" x2="581.6" y2="64.44" stroke="#d2d2d2" stroke-width="1.2"/><line x1="5.899999999999977" y1="83.82" x2="581.6" y2="83.82" stroke="#d2d2d2" stroke-width="1.2"/><line x1="5.899999999999977" y1="103.20" x2="581.6" y2="103.20" stroke="#d2d2d2" stroke-width="1.2"/><line x1="5.899999999999977" y1="122.58" x2="581.6" y2="122.58" stroke="#d2d2d2" stroke-width="1.2"/><line x1="5.899999999999977" y1="141.96" x2="581.6" y2="141.96" stroke="#d2d2d2" stroke-width="1.2"/><line x1="5.899999999999977" y1="161.34" x2="581.6" y2="161.34" stroke="#d2d2d2" stroke-width="1.2"/><line x1="5.899999999999977" y1="180.72" x2="581.6" y2="180.72" stroke="#d2d2d2" stroke-width="1.2"/><line x1="5.899999999999977" y1="200.10" x2="581.6" y2="200.10" stroke="#d2d2d2" stroke-width="1.2"/><line x1="5.899999999999977" y1="219.48" x2="581.6" y2="219.48" stroke="#d2d2d2" stroke-width="1.2"/><line x1="5.899999999999977" y1="238.86" x2="581.6" y2="238.86" stroke="#d2d2d2" stroke-width="1.2"/><line x1="5.899999999999977" y1="258.24" x2="581.6" y2="258.24" stroke="#a0a0a0" stroke-width="1.2"/><line x1="5.90" y1="6.30" x2="5.90" y2="258.24" stroke="#a0a0a0" stroke-width="1.6"/><line x1="36.80" y1="6.30" x2="36.80" y2="258.24" stroke="#d2d2d2" stroke-width="1.2"/><line x1="437.60" y1="6.30" x2="437.60" y2="258.24" stroke="#d2d2d2" stroke-width="1.2"/><line x1="503.80" y1="6.30" x2="503.80" y2="258.24" stroke="#d2d2d2" stroke-width="1.2"/><line x1="581.60" y1="6.30" x2="581.60" y2="258.24" stroke="#a0a0a0" stroke-width="1.2"/></svg>
<div class="a" style="left:120.5px;width:600px;text-align:center;top:411.74px;font-size:10.34px;line-height:10.34px;font-family:'Liberation Serif',serif;font-weight:bold;font-style:normal;color:#111;white-space:nowrap;">STT</div>
<div class="a" style="left:336.5px;width:600px;text-align:center;top:411.74px;font-size:10.34px;line-height:10.34px;font-family:'Liberation Serif',serif;font-weight:bold;font-style:normal;color:#111;white-space:nowrap;">Chỉ tiêu</div>
<div class="a" style="left:570px;width:600px;text-align:center;top:411.74px;font-size:10.34px;line-height:10.34px;font-family:'Liberation Serif',serif;font-weight:bold;font-style:normal;color:#111;white-space:nowrap;">Mã chi tiêu</div>
<div class="a" style="left:642.5px;width:600px;text-align:center;top:411.74px;font-size:10.34px;line-height:10.34px;font-family:'Liberation Serif',serif;font-weight:bold;font-style:normal;color:#111;white-space:nowrap;">Số tiền</div>
<div class="a" style="left:120.5px;width:600px;text-align:center;top:431.12px;font-size:10.34px;line-height:10.34px;font-family:'Liberation Serif',serif;font-weight:normal;font-style:normal;color:#111;white-space:nowrap;">(1)</div>
<div class="a" style="left:336.5px;width:600px;text-align:center;top:431.12px;font-size:10.34px;line-height:10.34px;font-family:'Liberation Serif',serif;font-weight:normal;font-style:normal;color:#111;white-space:nowrap;">(2)</div>
<div class="a" style="left:570px;width:600px;text-align:center;top:431.12px;font-size:10.34px;line-height:10.34px;font-family:'Liberation Serif',serif;font-weight:normal;font-style:normal;color:#111;white-space:nowrap;">(3)</div>
<div class="a" style="left:642.5px;width:600px;text-align:center;top:431.12px;font-size:10.34px;line-height:10.34px;font-family:'Liberation Serif',serif;font-weight:normal;font-style:normal;color:#111;white-space:nowrap;">(4)</div>
<div class="a" style="left:120.5px;width:600px;text-align:center;top:450.50px;font-size:10.34px;line-height:10.34px;font-family:'Liberation Serif',serif;font-weight:bold;font-style:normal;color:#111;white-space:nowrap;">3</div>
<div class="a" style="left:441px;top:450.50px;font-size:10.34px;line-height:10.34px;font-family:'Liberation Serif',serif;font-weight:bold;font-style:normal;color:#111;white-space:nowrap;">Xác định số thuế TNDN chênh lệch do doanh nghiệp hưởng thuế suất ưu đãi</div>
<div class="a" style="left:570px;width:600px;text-align:center;top:450.50px;font-size:10.34px;line-height:10.34px;font-family:'Liberation Serif',serif;font-weight:normal;font-style:normal;color:#111;white-space:nowrap;"></div>
<div class="a" style="left:377.5px;width:600px;text-align:right;top:450.50px;font-size:10.34px;line-height:10.34px;font-family:'Liberation Serif',serif;font-weight:normal;font-style:normal;color:#111;white-space:nowrap;"></div>
<div class="a" style="left:120.5px;width:600px;text-align:center;top:469.88px;font-size:10.34px;line-height:10.34px;font-family:'Liberation Serif',serif;font-weight:normal;font-style:normal;color:#111;white-space:nowrap;">3.1</div>
<div class="a" style="left:441px;top:469.88px;font-size:10.34px;line-height:10.34px;font-family:'Liberation Serif',serif;font-weight:normal;font-style:normal;color:#111;white-space:nowrap;">Tổng thu nhập tính thuế được hưởng thuế suất ưu đãi</div>
<div class="a" style="left:570px;width:600px;text-align:center;top:469.88px;font-size:10.34px;line-height:10.34px;font-family:'Liberation Serif',serif;font-weight:normal;font-style:normal;color:#111;white-space:nowrap;">[1]</div>
<div class="a" style="left:377.5px;width:600px;text-align:right;top:469.88px;font-size:10.34px;line-height:10.34px;font-family:'Liberation Serif',serif;font-weight:normal;font-style:normal;color:#111;white-space:nowrap;">1.382.352.541</div>
<div class="a" style="left:120.5px;width:600px;text-align:center;top:489.26px;font-size:10.34px;line-height:10.34px;font-family:'Liberation Serif',serif;font-weight:normal;font-style:normal;color:#111;white-space:nowrap;">3.2</div>
<div class="a" style="left:441px;top:489.26px;font-size:10.34px;line-height:10.34px;font-family:'Liberation Serif',serif;font-weight:normal;font-style:normal;color:#111;white-space:nowrap;">Thuế TNDN tính theo thuế suất ưu đãi</div>
<div class="a" style="left:570px;width:600px;text-align:center;top:489.26px;font-size:10.34px;line-height:10.34px;font-family:'Liberation Serif',serif;font-weight:normal;font-style:normal;color:#111;white-space:nowrap;">[2]</div>
<div class="a" style="left:377.5px;width:600px;text-align:right;top:489.26px;font-size:10.34px;line-height:10.34px;font-family:'Liberation Serif',serif;font-weight:normal;font-style:normal;color:#111;white-space:nowrap;">138.235.254</div>
<div class="a" style="left:120.5px;width:600px;text-align:center;top:508.64px;font-size:10.34px;line-height:10.34px;font-family:'Liberation Serif',serif;font-weight:normal;font-style:normal;color:#111;white-space:nowrap;">3.3</div>
<div class="a" style="left:441px;top:508.64px;font-size:10.34px;line-height:10.34px;font-family:'Liberation Serif',serif;font-weight:normal;font-style:normal;color:#111;white-space:nowrap;">Thuế TNDN tính theo thuế suất không phải thuế suất ưu đãi</div>
<div class="a" style="left:570px;width:600px;text-align:center;top:508.64px;font-size:10.34px;line-height:10.34px;font-family:'Liberation Serif',serif;font-weight:normal;font-style:normal;color:#111;white-space:nowrap;">[3]</div>
<div class="a" style="left:377.5px;width:600px;text-align:right;top:508.64px;font-size:10.34px;line-height:10.34px;font-family:'Liberation Serif',serif;font-weight:normal;font-style:normal;color:#111;white-space:nowrap;">276.470.508</div>
<div class="a" style="left:120.5px;width:600px;text-align:center;top:528.02px;font-size:10.34px;line-height:10.34px;font-family:'Liberation Serif',serif;font-weight:bold;font-style:normal;color:#111;white-space:nowrap;">3.4</div>
<div class="a" style="left:441px;top:528.02px;font-size:10.34px;line-height:10.34px;font-family:'Liberation Serif',serif;font-weight:bold;font-style:normal;color:#111;white-space:nowrap;">Thuế TNDN chênh lệch ([4] = [3] - [2])</div>
<div class="a" style="left:570px;width:600px;text-align:center;top:528.02px;font-size:10.34px;line-height:10.34px;font-family:'Liberation Serif',serif;font-weight:bold;font-style:normal;color:#111;white-space:nowrap;">[4]</div>
<div class="a" style="left:377.5px;width:600px;text-align:right;top:528.02px;font-size:10.34px;line-height:10.34px;font-family:'Liberation Serif',serif;font-weight:normal;font-style:normal;color:#111;white-space:nowrap;">138.235.254</div>
<div class="a" style="left:120.5px;width:600px;text-align:center;top:547.40px;font-size:10.34px;line-height:10.34px;font-family:'Liberation Serif',serif;font-weight:bold;font-style:normal;color:#111;white-space:nowrap;">4</div>
<div class="a" style="left:441px;top:547.40px;font-size:10.34px;line-height:10.34px;font-family:'Liberation Serif',serif;font-weight:bold;font-style:normal;color:#111;white-space:nowrap;">Xác định số thuế được miễn, giảm trong kỳ tính thuế:</div>
<div class="a" style="left:570px;width:600px;text-align:center;top:547.40px;font-size:10.34px;line-height:10.34px;font-family:'Liberation Serif',serif;font-weight:normal;font-style:normal;color:#111;white-space:nowrap;"></div>
<div class="a" style="left:377.5px;width:600px;text-align:right;top:547.40px;font-size:10.34px;line-height:10.34px;font-family:'Liberation Serif',serif;font-weight:normal;font-style:normal;color:#111;white-space:nowrap;"></div>
<div class="a" style="left:120.5px;width:600px;text-align:center;top:566.78px;font-size:10.34px;line-height:10.34px;font-family:'Liberation Serif',serif;font-weight:normal;font-style:normal;color:#111;white-space:nowrap;">4.1</div>
<div class="a" style="left:441px;top:566.78px;font-size:10.34px;line-height:10.34px;font-family:'Liberation Serif',serif;font-weight:normal;font-style:normal;color:#111;white-space:nowrap;">Tổng thu nhập tính thuế được miễn thuế hoặc giảm thuế</div>
<div class="a" style="left:570px;width:600px;text-align:center;top:566.78px;font-size:10.34px;line-height:10.34px;font-family:'Liberation Serif',serif;font-weight:normal;font-style:normal;color:#111;white-space:nowrap;">[5]</div>
<div class="a" style="left:377.5px;width:600px;text-align:right;top:566.78px;font-size:10.34px;line-height:10.34px;font-family:'Liberation Serif',serif;font-weight:normal;font-style:normal;color:#111;white-space:nowrap;">1.382.352.541</div>
<div class="a" style="left:120.5px;width:600px;text-align:center;top:586.16px;font-size:10.34px;line-height:10.34px;font-family:'Liberation Serif',serif;font-weight:normal;font-style:normal;color:#111;white-space:nowrap;">4.2</div>
<div class="a" style="left:441px;top:586.16px;font-size:10.34px;line-height:10.34px;font-family:'Liberation Serif',serif;font-weight:normal;font-style:normal;color:#111;white-space:nowrap;">Thuế suất thuế TNDN ưu đãi áp dụng (%)</div>
<div class="a" style="left:570px;width:600px;text-align:center;top:586.16px;font-size:10.34px;line-height:10.34px;font-family:'Liberation Serif',serif;font-weight:normal;font-style:normal;color:#111;white-space:nowrap;">[6]</div>
<div class="a" style="left:377.5px;width:600px;text-align:right;top:586.16px;font-size:10.34px;line-height:10.34px;font-family:'Liberation Serif',serif;font-weight:normal;font-style:normal;color:#111;white-space:nowrap;">10,000</div>
<div class="a" style="left:120.5px;width:600px;text-align:center;top:605.54px;font-size:10.34px;line-height:10.34px;font-family:'Liberation Serif',serif;font-weight:normal;font-style:normal;color:#111;white-space:nowrap;">4.3</div>
<div class="a" style="left:441px;top:605.54px;font-size:10.34px;line-height:10.34px;font-family:'Liberation Serif',serif;font-weight:normal;font-style:normal;color:#111;white-space:nowrap;">Thuế thu nhập doanh nghiệp phải nộp</div>
<div class="a" style="left:570px;width:600px;text-align:center;top:605.54px;font-size:10.34px;line-height:10.34px;font-family:'Liberation Serif',serif;font-weight:normal;font-style:normal;color:#111;white-space:nowrap;">[7]</div>
<div class="a" style="left:377.5px;width:600px;text-align:right;top:605.54px;font-size:10.34px;line-height:10.34px;font-family:'Liberation Serif',serif;font-weight:normal;font-style:normal;color:#111;white-space:nowrap;">138.235.254</div>
<div class="a" style="left:120.5px;width:600px;text-align:center;top:624.92px;font-size:10.34px;line-height:10.34px;font-family:'Liberation Serif',serif;font-weight:normal;font-style:normal;color:#111;white-space:nowrap;">4.4</div>
<div class="a" style="left:441px;top:624.92px;font-size:10.34px;line-height:10.34px;font-family:'Liberation Serif',serif;font-weight:normal;font-style:normal;color:#111;white-space:nowrap;">Tỷ lệ thuế TNDN được miễn hoặc giảm (%)</div>
<div class="a" style="left:570px;width:600px;text-align:center;top:624.92px;font-size:10.34px;line-height:10.34px;font-family:'Liberation Serif',serif;font-weight:normal;font-style:normal;color:#111;white-space:nowrap;">[8]</div>
<div class="a" style="left:377.5px;width:600px;text-align:right;top:624.92px;font-size:10.34px;line-height:10.34px;font-family:'Liberation Serif',serif;font-weight:normal;font-style:normal;color:#111;white-space:nowrap;">100,000</div>
<div class="a" style="left:120.5px;width:600px;text-align:center;top:644.30px;font-size:10.34px;line-height:10.34px;font-family:'Liberation Serif',serif;font-weight:bold;font-style:normal;color:#111;white-space:nowrap;">4.5</div>
<div class="a" style="left:441px;top:644.30px;font-size:10.34px;line-height:10.34px;font-family:'Liberation Serif',serif;font-weight:bold;font-style:normal;color:#111;white-space:nowrap;">Thuế Thu nhập doanh nghiệp được miễn, giảm</div>
<div class="a" style="left:570px;width:600px;text-align:center;top:644.30px;font-size:10.34px;line-height:10.34px;font-family:'Liberation Serif',serif;font-weight:normal;font-style:normal;color:#111;white-space:nowrap;">[9]</div>
<div class="a" style="left:377.5px;width:600px;text-align:right;top:644.30px;font-size:10.34px;line-height:10.34px;font-family:'Liberation Serif',serif;font-weight:normal;font-style:normal;color:#111;white-space:nowrap;">138.235.254</div>
<div class="a" style="left:1335px;top:165px;width:17px;height:533px;background:linear-gradient(90deg,#e6e6e6,#f0f0f0 30%,#f0f0f0 70%,#e6e6e6)"></div>
<div class="a" style="left:1335px;top:165px;width:17px;height:9px;background:#dcdcdc;border:1.5px solid #666"></div>
<svg class="a" style="left:1341px;top:181px;" width="7" height="5" viewBox="0 0 7 5"><path d="M0 4.5L3.5 0 7 4.5z" fill="#333"/></svg>
<div class="a" style="left:1336px;top:592px;width:15px;height:29px;background:linear-gradient(90deg,#f4f4f4,#dcdcdc);border:1px solid #9a9a9a;border-radius:2px"></div>
<div class="a" style="left:1340px;top:603px;width:7px;height:1.3px;background:#555"></div>
<div class="a" style="left:1340px;top:606px;width:7px;height:1.3px;background:#555"></div>
<div class="a" style="left:1340px;top:609px;width:7px;height:1.3px;background:#555"></div>
<svg class="a" style="left:1341px;top:690px;" width="7" height="5" viewBox="0 0 7 5"><path d="M0 0h7L3.5 4.5z" fill="#333"/></svg>
<div class="a" style="left:1352px;top:165px;width:1px;height:533px;background:#e2e2e2"></div>
<div class="a" style="left:1335px;top:174px;width:1px;height:524px;background:#fafafa"></div>
<div class="a" style="left:1365px;top:165px;width:1px;height:533px;background:#e6e6e6"></div>
<svg class="a" style="left:1356px;top:410px;" width="6" height="10" viewBox="0 0 6 10"><path d="M5.5 0v10L0 5z" fill="#999"/></svg>
<div class="a" style="left:0px;top:698px;width:1366px;height:1px;background:#e3e3e3"></div>
<div class="a" style="left:38px;top:698px;width:0px;height:0px;"></div>
<svg class="a" style="left:16px;top:706px;" width="16" height="14" viewBox="0 0 16 14"><path d="M7.5 1L2 7l5.5 6M13.5 1L8 7l5.5 6" fill="none" stroke="#444" stroke-width="1.3"/></svg>
<svg class="a" style="left:46px;top:706px;" width="12" height="14" viewBox="0 0 12 14"><path d="M9 1L3 7l6 6" fill="none" stroke="#444" stroke-width="1.3"/></svg>
<div class="a" style="left:68px;top:703px;width:115px;height:20px;background:#fff;border:1px solid #e4e4e4"></div>
<div class="a" style="left:73px;top:706.74px;font-size:13.3px;line-height:13.3px;font-family:'Liberation Sans',sans-serif;font-weight:normal;font-style:normal;color:#111;white-space:nowrap;">8 / 9</div>
<svg class="a" style="left:172px;top:711px;" width="6" height="4" viewBox="0 0 6 4"><path d="M0 0h6L3 3.5z" fill="#111"/></svg>
<svg class="a" style="left:192px;top:706px;" width="12" height="14" viewBox="0 0 12 14"><path d="M3 1l6 6-6 6" fill="none" stroke="#444" stroke-width="1.3"/></svg>
<svg class="a" style="left:218px;top:706px;" width="16" height="14" viewBox="0 0 16 14"><path d="M2.5 1L8 7l-5.5 6M8.5 1L14 7l-5.5 6" fill="none" stroke="#444" stroke-width="1.3"/></svg>
<svg class="a" style="left:245px;top:704px;" width="18" height="17" viewBox="0 0 18 17"><path d="M4.5 10.5h-3V1.5h4" fill="none" stroke="#333" stroke-width="1.3"/><rect x="5" y="6" width="11.5" height="10" fill="none" stroke="#333" stroke-width="1.4"/><path d="M15.5 2H9M11 0l-2.2 2 2.2 2" fill="none" stroke="#333" stroke-width="1.1"/></svg>
<svg class="a" style="left:273px;top:704px;" width="18" height="17" viewBox="0 0 18 17"><g stroke="#c4c4c4" fill="none" stroke-width="1.3"><path d="M1.5 7.5V1.5h11v4"/><rect x="5" y="6" width="11.5" height="10"/><path d="M1 13.5h6M5 11.5l2 2-2 2" stroke-width="1.1"/></g></svg>
<svg class="a" style="left:996px;top:704px;" width="18" height="18" viewBox="0 0 18 18"><rect x="1.6" y="1.6" width="13.5" height="14.5" stroke="#333" stroke-width="1.35" fill="none" rx="1"/><path d="M5 6.25h7M5 9.25h7M5 12.25h7" stroke="#333" stroke-width="1.35" fill="none" rx="1" stroke-width="1.3"/></svg>
<div class="a" style="left:1020px;top:702px;width:24px;height:22px;background:#dedede"></div>
<svg class="a" style="left:1024px;top:704px;" width="18" height="18" viewBox="0 0 18 18"><rect x="1.6" y="1.6" width="13.5" height="9" stroke="#333" stroke-width="1.35" fill="none" rx="1"/><path d="M5 5.25h7M5 8h7" stroke="#333" stroke-width="1.35" fill="none" rx="1" stroke-width="1.3"/><path d="M1.75 17v-3.25h13.5V17" stroke="#333" stroke-width="1.35" fill="none" rx="1"/></svg>
<svg class="a" style="left:1051px;top:704px;" width="18" height="18" viewBox="0 0 18 18"><rect x="1.6" y="1.6" width="6" height="14.5" stroke="#333" stroke-width="1.35" fill="none" rx="1"/><rect x="9.75" y="1.75" width="6" height="14.5" stroke="#333" stroke-width="1.35" fill="none" rx="1"/><path d="M3.5 6h2.5M3.5 9h2.5M3.5 12h2.5M11.5 6h2.5M11.5 9h2.5M11.5 12h2.5" stroke="#333" stroke-width="1.35" fill="none" rx="1" stroke-width="1.2"/></svg>
<svg class="a" style="left:1079px;top:704px;" width="18" height="18" viewBox="0 0 18 18"><rect x="1.6" y="1.6" width="6" height="7.5" stroke="#333" stroke-width="1.35" fill="none" rx="1"/><rect x="9.75" y="1.75" width="6" height="7.5" stroke="#333" stroke-width="1.35" fill="none" rx="1"/><path d="M3.5 4.5h2.5M3.5 6.8h2.5M11.5 4.5h2.5M11.5 6.8h2.5" stroke="#333" stroke-width="1.35" fill="none" rx="1" stroke-width="1.1"/><path d="M1.75 17v-5.25h6V17M9.75 17v-5.25h6V17" stroke="#333" stroke-width="1.35" fill="none" rx="1"/></svg>
<div class="a" style="left:1104px;top:712px;width:8px;height:2px;background:#444"></div>
<div class="a" style="left:1115px;top:712px;width:112px;height:2px;background:#b4b4b4"></div>
<svg class="a" style="left:1157px;top:707px;" width="12" height="12" viewBox="0 0 12 12"><circle cx="6" cy="6" r="5.2" fill="#fff" stroke="#555" stroke-width="1.1"/></svg>
<svg class="a" style="left:1229px;top:708px;" width="10" height="10" viewBox="0 0 10 10"><path d="M0.5 5h9M5 0.5v9" stroke="#444" stroke-width="2"/></svg>
<div class="a" style="left:1240px;top:703px;width:79px;height:20px;background:#fff;border:1px solid #e4e4e4"></div>
<div class="a" style="left:1244px;top:707.00px;font-size:13px;line-height:13px;font-family:'Liberation Sans',sans-serif;font-weight:normal;font-style:normal;color:#111;white-space:nowrap;">86%</div>
<svg class="a" style="left:1310px;top:711px;" width="7" height="4" viewBox="0 0 7 4"><path d="M0 0h7L3.5 3.5z" fill="#aaa"/></svg>
<svg class="a" style="left:1326px;top:705px;" width="17" height="17" viewBox="0 0 17 17"><path d="M1.5 1.5l4 4M1.5 1.5v3.5M1.5 1.5h3.5M15 1.5l-4 4M15 1.5v3.5M15 1.5h-3.5M1.5 15l4-4M1.5 15v-3.5M1.5 15h3.5M15 15l-4-4M15 15v-3.5M15 15h-3.5" fill="none" stroke="#444" stroke-width="1.2"/></svg>
<div class="a" style="left:0px;top:728px;width:1366px;height:40px;background:linear-gradient(180deg,#0e131a 0px,#0e131a 1px,#8e9aa8 1px,#6a7888 2px,#4e5d70 3px,#3a4759 9px,#2a3546 15px,#141a24 19px,#0b0f15 23px,#090c11 40px)"></div>
<div class="a" style="left:0px;top:730px;width:22px;height:38px;background:linear-gradient(90deg,#090c11 0,#090c11 12px,rgba(9,12,17,0) 22px)"></div>
<div class="a" style="left:36px;top:729px;width:30px;height:18px;background:radial-gradient(ellipse at 50% 20%,rgba(30,70,200,0.9),rgba(0,0,0,0) 70%)"></div>
<div class="a" style="left:115px;top:729px;width:75px;height:20px;background:radial-gradient(ellipse at 50% 20%,rgba(50,100,230,0.75),rgba(0,0,0,0) 70%)"></div>
<div class="a" style="left:240px;top:729px;width:70px;height:20px;background:radial-gradient(ellipse at 50% 20%,rgba(120,140,165,0.5),rgba(0,0,0,0) 70%)"></div>
<div class="a" style="left:400px;top:729px;width:100px;height:20px;background:radial-gradient(ellipse at 50% 20%,rgba(120,140,170,0.55),rgba(0,0,0,0) 70%)"></div>
<div class="a" style="left:495px;top:729px;width:65px;height:20px;background:radial-gradient(ellipse at 50% 20%,rgba(40,90,230,0.85),rgba(0,0,0,0) 70%)"></div>
<div class="a" style="left:862px;top:729px;width:40px;height:16px;background:radial-gradient(ellipse at 50% 20%,rgba(130,150,170,0.45),rgba(0,0,0,0) 70%)"></div>
<div class="a" style="left:60px;top:729px;width:58px;height:38px;border-radius:3px;border:1px solid rgba(170,180,195,0.75);background:linear-gradient(180deg,#a6b4d4 0%,#7888b8 22%,#45578e 45%,#272c35 58%,#1c2027 100%);box-shadow:inset 0 0 0 1px rgba(0,0,0,0.45)"></div>
<div class="a" style="left:62px;top:748px;width:54px;height:17px;background:linear-gradient(155deg,rgba(255,255,255,0) 45%,rgba(255,255,255,0.06) 46%,rgba(255,255,255,0.02) 100%)"></div>
<div class="a" style="left:184px;top:729px;width:58px;height:38px;border-radius:3px;border:1px solid rgba(170,180,195,0.75);background:linear-gradient(180deg,#c4c9cf 0%,#98a0a8 22%,#5e6670 45%,#2a2e34 58%,#1c1f24 100%);box-shadow:inset 0 0 0 1px rgba(0,0,0,0.45)"></div>
<div class="a" style="left:186px;top:748px;width:54px;height:17px;background:linear-gradient(155deg,rgba(255,255,255,0) 45%,rgba(255,255,255,0.06) 46%,rgba(255,255,255,0.02) 100%)"></div>
<div class="a" style="left:308px;top:729px;width:58px;height:38px;border-radius:3px;border:1px solid rgba(170,180,195,0.75);background:linear-gradient(180deg,#c4c9cf 0%,#98a0a8 22%,#5e6670 45%,#2a2e34 58%,#1c1f24 100%);box-shadow:inset 0 0 0 1px rgba(0,0,0,0.45)"></div>
<div class="a" style="left:310px;top:748px;width:54px;height:17px;background:linear-gradient(155deg,rgba(255,255,255,0) 45%,rgba(255,255,255,0.06) 46%,rgba(255,255,255,0.02) 100%)"></div>
<div class="a" style="left:556px;top:729px;width:58px;height:38px;border-radius:3px;border:1px solid rgba(170,180,195,0.75);background:linear-gradient(180deg,#a6b4d4 0%,#7888b8 22%,#45578e 45%,#272c35 58%,#1c2027 100%);box-shadow:inset 0 0 0 1px rgba(0,0,0,0.45)"></div>
<div class="a" style="left:558px;top:748px;width:54px;height:17px;background:linear-gradient(155deg,rgba(255,255,255,0) 45%,rgba(255,255,255,0.06) 46%,rgba(255,255,255,0.02) 100%)"></div>
<div class="a" style="left:618px;top:729px;width:58px;height:38px;border-radius:3px;border:1px solid rgba(170,180,195,0.75);background:linear-gradient(180deg,#a6b4d4 0%,#7888b8 22%,#45578e 45%,#272c35 58%,#1c2027 100%);box-shadow:inset 0 0 0 1px rgba(0,0,0,0.45)"></div>
<div class="a" style="left:620px;top:748px;width:54px;height:17px;background:linear-gradient(155deg,rgba(255,255,255,0) 45%,rgba(255,255,255,0.06) 46%,rgba(255,255,255,0.02) 100%)"></div>
<div class="a" style="left:680px;top:729px;width:58px;height:38px;border-radius:3px;border:1px solid rgba(170,180,195,0.75);background:linear-gradient(180deg,#dfe6ef 0%,#b6c0cf 30%,#8a939f 50%,#6e757e 58%,#62686f 100%);box-shadow:inset 0 0 0 1px rgba(0,0,0,0.45)"></div>
<div class="a" style="left:682px;top:748px;width:54px;height:17px;background:linear-gradient(155deg,rgba(255,255,255,0) 45%,rgba(255,255,255,0.06) 46%,rgba(255,255,255,0.02) 100%)"></div>
<div class="a" style="left:742px;top:729px;width:58px;height:38px;border-radius:3px;border:1px solid rgba(170,180,195,0.75);background:linear-gradient(180deg,#c4c9cf 0%,#98a0a8 22%,#5e6670 45%,#2a2e34 58%,#1c1f24 100%);box-shadow:inset 0 0 0 1px rgba(0,0,0,0.45)"></div>
<div class="a" style="left:744px;top:748px;width:54px;height:17px;background:linear-gradient(155deg,rgba(255,255,255,0) 45%,rgba(255,255,255,0.06) 46%,rgba(255,255,255,0.02) 100%)"></div>
<div class="a" style="left:804px;top:729px;width:58px;height:38px;border-radius:3px;border:1px solid rgba(170,180,195,0.75);background:linear-gradient(180deg,#c4c9cf 0%,#98a0a8 22%,#5e6670 45%,#2a2e34 58%,#1c1f24 100%);box-shadow:inset 0 0 0 1px rgba(0,0,0,0.45)"></div>
<div class="a" style="left:806px;top:748px;width:54px;height:17px;background:linear-gradient(155deg,rgba(255,255,255,0) 45%,rgba(255,255,255,0.06) 46%,rgba(255,255,255,0.02) 100%)"></div>
<div class="a" style="left:859px;top:730px;width:4px;height:36px;border:1px solid rgba(170,180,195,0.6);border-left:none;border-radius:0 3px 3px 0"></div>
<svg class="a" style="left:7px;top:729px;" width="40" height="39" viewBox="0 0 40 39"><defs><linearGradient id="orbt" x1="0" y1="0" x2="0" y2="1"><stop offset="0" stop-color="#dfe8f0"/><stop offset="1" stop-color="#6f8aa6"/></linearGradient><radialGradient id="orbb" cx="50%" cy="100%" r="70%"><stop offset="0" stop-color="#08e0ff"/><stop offset="0.5" stop-color="#0a7cc4"/><stop offset="1" stop-color="#0b3f78"/></radialGradient></defs>
<circle cx="20" cy="19.3" r="18.3" fill="url(#orbb)" stroke="#7a7f86" stroke-width="1"/>
<path d="M2.6 18.5A17.4 17.4 0 0 1 37.4 18.5C37 19.5 31 21 20 19.5 9 21 3 19.5 2.6 18.5z" fill="url(#orbt)" opacity="0.9"/>
<path d="M10.5 9.5c2.8-1.2 5.6-1.2 8.8.3l-1.6 8c-2.9-1.4-5.8-1.4-8.8-.2z" fill="#f25a1e"/>
<path d="M20.3 10.3c3 1.3 5.8 1.4 8.8.2l-1.6 8c-3 1.2-5.9 1.2-8.8-.2z" fill="#86c23c"/>
<path d="M8.7 18.8c3-1.3 5.9-1.3 8.8 0l-1.6 8c-2.9-1.3-5.8-1.3-8.8 0z" fill="#2a9ee8"/>
<path d="M18.5 19c3 1.4 5.9 1.4 8.8.2l-1.6 8c-3 1.2-5.9 1.2-8.8-.2z" fill="#fdb924"/></svg>
<svg class="a" style="left:72px;top:731px;" width="36" height="34" viewBox="0 0 36 34"><path d="M15 1.2c-6 0-10.5 1.3-12.2 6-1 2.8-1.3 5.8-1.3 9.3s.3 6.8 1.3 9.5c.6 1.6 1.5 2.8 2.6 3.7L4 31.8l5.2-1.3c1.8.8 3.8 1 5.8 1h5c6 0 10.2-1.3 12-6 1-2.7 1.3-5.8 1.3-9.3s-.3-6.5-1.3-9.3c-1.7-4.7-6-6-12-6z" fill="#0a68f5"/><path transform="translate(1.2,-0.3)" d="M16.5 1.4c-6 0-9.8 1.3-11.3 5.8-.9 2.6-1.2 5.6-1.2 9s.3 6.5 1.2 9c.6 1.6 1.4 2.7 2.4 3.5l-.7 2.2 3.8-1c1.6.6 3.2.8 5 .8h3.8c6 0 9.9-1.2 11.3-5.7.9-2.6 1.2-5.5 1.2-8.9s-.3-6.4-1.2-9c-1.5-4.5-5.3-5.7-11.3-5.7z" fill="#fff"/><text x="19.5" y="20" font-family="Liberation Sans" font-size="10" fill="#0a68f5" text-anchor="middle">Zalo</text></svg>
<svg class="a" style="left:134px;top:731px;" width="34" height="34" viewBox="0 0 34 34"><defs><linearGradient id="ieg" x1="0" y1="0" x2="0" y2="1"><stop offset="0" stop-color="#9be8ff"/><stop offset="1" stop-color="#1b8fe0"/></linearGradient><linearGradient id="ier" x1="0" y1="0" x2="1" y2="0"><stop offset="0" stop-color="#f6a800"/><stop offset="0.5" stop-color="#ffe27a"/><stop offset="1" stop-color="#f5b800"/></linearGradient></defs><path d="M17.5 5.5c-7 0-12.5 5.5-12.5 12.5s5.5 12.5 12.5 12.5c5.2 0 9.6-3 11.6-7.5h-7.2c-1.2 1.4-2.8 2.2-4.6 2.2-3 0-5.4-2.2-5.9-5.2h18.5c.1-.7.1-1.3.1-2C30 11 24.5 5.5 17.5 5.5zM11.6 15.5c.7-2.7 3-4.6 5.9-4.6s5.2 1.9 5.9 4.6z" fill="url(#ieg)"/><path d="M3.5 30.5C0.5 27 5 18 13.5 10.5S29.5 0.5 32 3c1.6 1.6 .3 5.5-3 10" fill="none" stroke="url(#ier)" stroke-width="2.6" stroke-linecap="round"/></svg>
<svg class="a" style="left:196px;top:735px;" width="34" height="30" viewBox="0 0 34 30"><path d="M1.5 4.5h9l2 2h18v20h-29z" fill="#e8c66a"/><rect x="3" y="3" width="5" height="2.5" fill="#2fb344"/><rect x="12" y="4.5" width="5" height="2.5" fill="#e33"/><rect x="20" y="6" width="5" height="2.5" fill="#3af"/><path d="M1.5 9h29v17.5h-29z" fill="#f6dd8e"/><path d="M5 18h22v8h-5v-4h-12v4H5z" fill="#7cc6ec" stroke="#3b8fc4" stroke-width="0.8"/></svg>
<svg class="a" style="left:259px;top:736px;" width="30" height="26" viewBox="0 0 30 26"><rect x="6" y="2" width="20" height="22" fill="#8ec3e6"/><rect x="4" y="2" width="20" height="22" fill="#a8d4f0" stroke="#6aa9d6" stroke-width="0.8"/><rect x="1" y="1" width="20" height="23" fill="#7bb8e0" stroke="#5a98c8" stroke-width="0.8"/><circle cx="11" cy="12.5" r="8" fill="#f37b1d" stroke="#fff" stroke-width="1"/><path d="M8.5 8v9l7-4.5z" fill="#fff"/></svg>
<svg class="a" style="left:321px;top:732px;" width="34" height="34" viewBox="0 0 34 34"><circle cx="15" cy="16" r="14" fill="#db4437"/><path d="M15 16L27.1 9A14 14 0 0 1 22 28.1z" fill="#f4c20d"/><path d="M15 16L22 28.1A14 14 0 0 1 2.9 9z" fill="#0f9d58"/><path d="M15 16H29A14 14 0 0 0 27.1 9z" fill="#f4c20d"/><circle cx="15" cy="16" r="6" fill="#fff"/><circle cx="15" cy="16" r="4.8" fill="#4285f4"/><circle cx="24" cy="25" r="7.3" fill="#9b38c8"/><text x="24" y="28.5" font-family="Liberation Sans" font-weight="bold" font-size="9" fill="#fff" text-anchor="middle">T</text></svg>
<svg class="a" style="left:382px;top:735px;" width="34" height="30" viewBox="0 0 34 30"><g font-family="Liberation Sans" font-weight="bold" font-size="8.5" fill="#e22" text-anchor="middle" stroke="none"><rect x="1" y="2" width="14" height="12" rx="1.5" fill="#eee" stroke="#bbb" stroke-width="0.8"/><rect x="18" y="2" width="14" height="12" rx="1.5" fill="#eee" stroke="#bbb" stroke-width="0.8"/><rect x="9" y="14.5" width="14" height="12" rx="1.5" fill="#eee" stroke="#bbb" stroke-width="0.8"/><text x="8" y="10.5">u</text><text x="25" y="11">i</text><text x="16" y="23">n</text></g></svg>
<svg class="a" style="left:446px;top:733px;" width="30" height="32" viewBox="0 0 30 32"><path d="M14 3.5A13 13 0 1 0 27.5 14L21 14A6.5 6.5 0 1 1 14 8z" fill="#86c440" stroke="#fff" stroke-width="0.8" stroke-opacity="0.7"/><circle cx="14" cy="16.5" r="5.6" fill="#fff"/><circle cx="14" cy="16.5" r="3.8" fill="#6cb82e"/><path d="M14.6 3.5L16.5 9" stroke="#e94a2c" stroke-width="2.2"/><path d="M19.5 6.5l2.8-5h5.5l-6 9" fill="#86c440"/><path d="M19.2 11.5l5.5-3.5" stroke="#e94a2c" stroke-width="2.2"/></svg>
<svg class="a" style="left:507px;top:732px;" width="32" height="31" viewBox="0 0 32 31"><defs><linearGradient id="wg" x1="0" y1="0" x2="0" y2="1"><stop offset="0" stop-color="#3a8ef0"/><stop offset="1" stop-color="#0a3fa8"/></linearGradient></defs><path d="M3 1h24.5v28H3z" fill="#fff" stroke="#3c78d8" stroke-width="1"/><path d="M27.5 1v28" stroke="#1c56c0" stroke-width="2"/><path d="M4 2h22v6H4z" fill="#dbe8fa"/><path d="M5 6h5l2.5 11 3-11h3.5l3 11 2.5-11h4.5l-5.2 16h-4l-3-10.5-3 10.5h-4z" fill="url(#wg)"/><path d="M19 22l11 3.5-2 5-10-2z" fill="#f4f8ff" stroke="#7fa2d4" stroke-width="0.8"/></svg>
<svg class="a" style="left:567px;top:734px;" width="36" height="30" viewBox="0 0 36 30"><path d="M3 16L7 3l12 3-4 13z" fill="#8fd672" stroke="#5aa84a" stroke-width="0.5"/><rect x="8" y="7" width="13" height="15" fill="#a6d8f6" stroke="#6aaed8" stroke-width="0.5"/><path d="M12 9.5l15-4 4 15-15 4z" fill="#f7e067" stroke="#d8b830" stroke-width="0.6"/></svg>
<svg class="a" style="left:627px;top:733px;" width="40" height="32" viewBox="0 0 40 32"><path d="M8 12c2-5 7-8 12-8 4 0 7 1.5 9 4" fill="none" stroke="#e2231a" stroke-width="2.5"/><path d="M4 10l6 4 1-6z" fill="#e2231a"/><path d="M31 21c-2 5-7 8-12 8-4 0-7-1.5-9-4" fill="none" stroke="#f39a1e" stroke-width="2.5"/><path d="M34 22l-6-3-1 6z" fill="#f39a1e"/><text x="19.5" y="20.5" font-family="Liberation Sans" font-weight="bold" font-size="12" fill="#f7a21b" stroke="#8a4a00" stroke-width="0.4" text-anchor="middle">htkk</text></svg>
<svg class="a" style="left:692px;top:731px;" width="35" height="35" viewBox="0 0 35 35"><path d="M1 1h25v8h8v25H1z" fill="#f28c28"/><path d="M27.5 1l6.5 6.5h-6.5z" fill="#f28c28"/><path d="M17.5 7l10 10-10 10-10-10z" fill="#f7a55a" opacity="0.55"/><circle cx="16" cy="15" r="7.6" fill="#fff"/><circle cx="17.8" cy="14.8" r="4.6" fill="#f28c28"/><path d="M15.8 17.6c1.6.5 3.2 0 4.3-1.2.2.7 0 1.4-.4 2 .9-.3 1.5-.9 1.9-1.6-.4 2-2.3 3.3-4.3 3.1-.8-.1-1.3-.9-1.5-2.3z" fill="#fff"/><text x="17" y="31.5" font-family="Liberation Sans" font-weight="bold" font-size="7.5" fill="#fff" text-anchor="middle">PDF</text></svg>
<svg class="a" style="left:755px;top:734px;" width="34" height="30" viewBox="0 0 34 30"><ellipse cx="12" cy="11" rx="11" ry="9.5" fill="#3fce62"/><path d="M5 18l-1 4 5-3z" fill="#3fce62"/><circle cx="8.3" cy="9" r="1.3" fill="#1a6e2e"/><circle cx="15.7" cy="9" r="1.3" fill="#1a6e2e"/><ellipse cx="22" cy="19.5" rx="9.5" ry="8" fill="#ececec" stroke="#d0d0d0" stroke-width="0.5"/><path d="M27 25.5l2 3-5-2z" fill="#ececec"/><circle cx="18.8" cy="18" r="1.1" fill="#999"/><circle cx="25" cy="18" r="1.1" fill="#999"/></svg>
<svg class="a" style="left:814px;top:731px;" width="36" height="34" viewBox="0 0 36 34"><defs><linearGradient id="xg" x1="0" y1="0" x2="1" y2="1"><stop offset="0" stop-color="#e6f4e6"/><stop offset="1" stop-color="#9fd09f"/></linearGradient><linearGradient id="xx" x1="0" y1="0" x2="0" y2="1"><stop offset="0" stop-color="#5bb85b"/><stop offset="1" stop-color="#1e6e2e"/></linearGradient></defs><path d="M6 1h22.5v30H2V5c0-2 2-4 4-4z" fill="url(#xg)" stroke="#2a8a3e" stroke-width="1.4"/><path d="M6 5h6l3.5 6 3.5-6h5.5l-6 9.5 6.5 10h-6l-3.8-6.5-3.8 6.5H6l6.5-10z" fill="url(#xx)"/><path d="M14 20l17 4-2.5 7-15.5-2z" fill="#fff" stroke="#9ccf9c" stroke-width="0.8"/><path d="M16 23l12 2.5M15.5 26l11 2" stroke="#7cc07c" stroke-width="0.9"/></svg>
<div class="a" style="left:1124px;top:740.34px;font-size:12px;line-height:12px;font-family:'Liberation Sans',sans-serif;font-weight:normal;font-style:normal;color:#fff;white-space:nowrap;">EN</div>
<svg class="a" style="left:1155px;top:746px;" width="10" height="5" viewBox="0 0 10 5"><path d="M0 5L5 0l5 5z" fill="#fff"/></svg>
<svg class="a" style="left:1175px;top:740px;" width="18" height="18" viewBox="0 0 18 18"><defs><linearGradient id="vg" x1="0" y1="0" x2="1" y2="1"><stop offset="0" stop-color="#f6d0d0"/><stop offset="1" stop-color="#e89a9a"/></linearGradient></defs><rect x="0.5" y="0.5" width="17" height="17" fill="url(#vg)" stroke="#c55" stroke-width="0.6"/><path d="M3.5 3.5l5.5 12 5.5-12h-2.8L9 11 6.3 3.5z" fill="#c0161c"/></svg>
<svg class="a" style="left:1200px;top:740px;" width="16" height="18" viewBox="0 0 16 18"><path d="M9 2v4M13 2v4M7 6h8v4c0 2-1.5 3.5-4 3.5S7 12 7 10z" fill="#fff" stroke="#fff" stroke-width="1"/><path d="M11 13.5V17" stroke="#fff" stroke-width="1.3"/><path d="M6 5C3 5 2 7 2 9v4" fill="none" stroke="#ccc" stroke-width="1"/><path d="M1.5 11l5 5M6.5 11l-5 5" stroke="#e41a1a" stroke-width="1.8"/></svg>
<svg class="a" style="left:1224px;top:743px;" width="16" height="12" viewBox="0 0 16 12"><rect x="1" y="9" width="2" height="2" fill="#fff"/><rect x="4.2" y="7" width="2" height="4" fill="#fff"/><rect x="7.4" y="5" width="2" height="6" fill="#fff"/><rect x="10.6" y="3" width="2" height="8" fill="#fff"/><rect x="13.8" y="1" width="2" height="10" fill="#fff"/></svg>
<svg class="a" style="left:1248px;top:742px;" width="16" height="14" viewBox="0 0 16 14"><path d="M1 5h3l4-4v12L4 9H1z" fill="#fff"/><path d="M10 4.5c1 1.5 1 3.5 0 5M12.5 2.5c2 2.5 2 6.5 0 9" fill="none" stroke="#fff" stroke-width="1.1"/></svg>
<div class="a" style="left:1011px;width:600px;text-align:center;top:735.34px;font-size:12px;line-height:12px;font-family:'Liberation Sans',sans-serif;font-weight:normal;font-style:normal;color:#fff;white-space:nowrap;">2:54 PM</div>
<div class="a" style="left:1010px;width:600px;text-align:center;top:751.84px;font-size:12px;line-height:12px;font-family:'Liberation Sans',sans-serif;font-weight:normal;font-style:normal;color:#fff;white-space:nowrap;">10/11/2021</div>
<div class="a" style="left:1352px;top:729px;width:14px;height:38px;border:1px solid rgba(160,170,185,0.6);border-right:none;border-radius:2px 0 0 2px;background:linear-gradient(90deg,rgba(255,255,255,0.08),rgba(255,255,255,0.02))"></div>
</body></html>
